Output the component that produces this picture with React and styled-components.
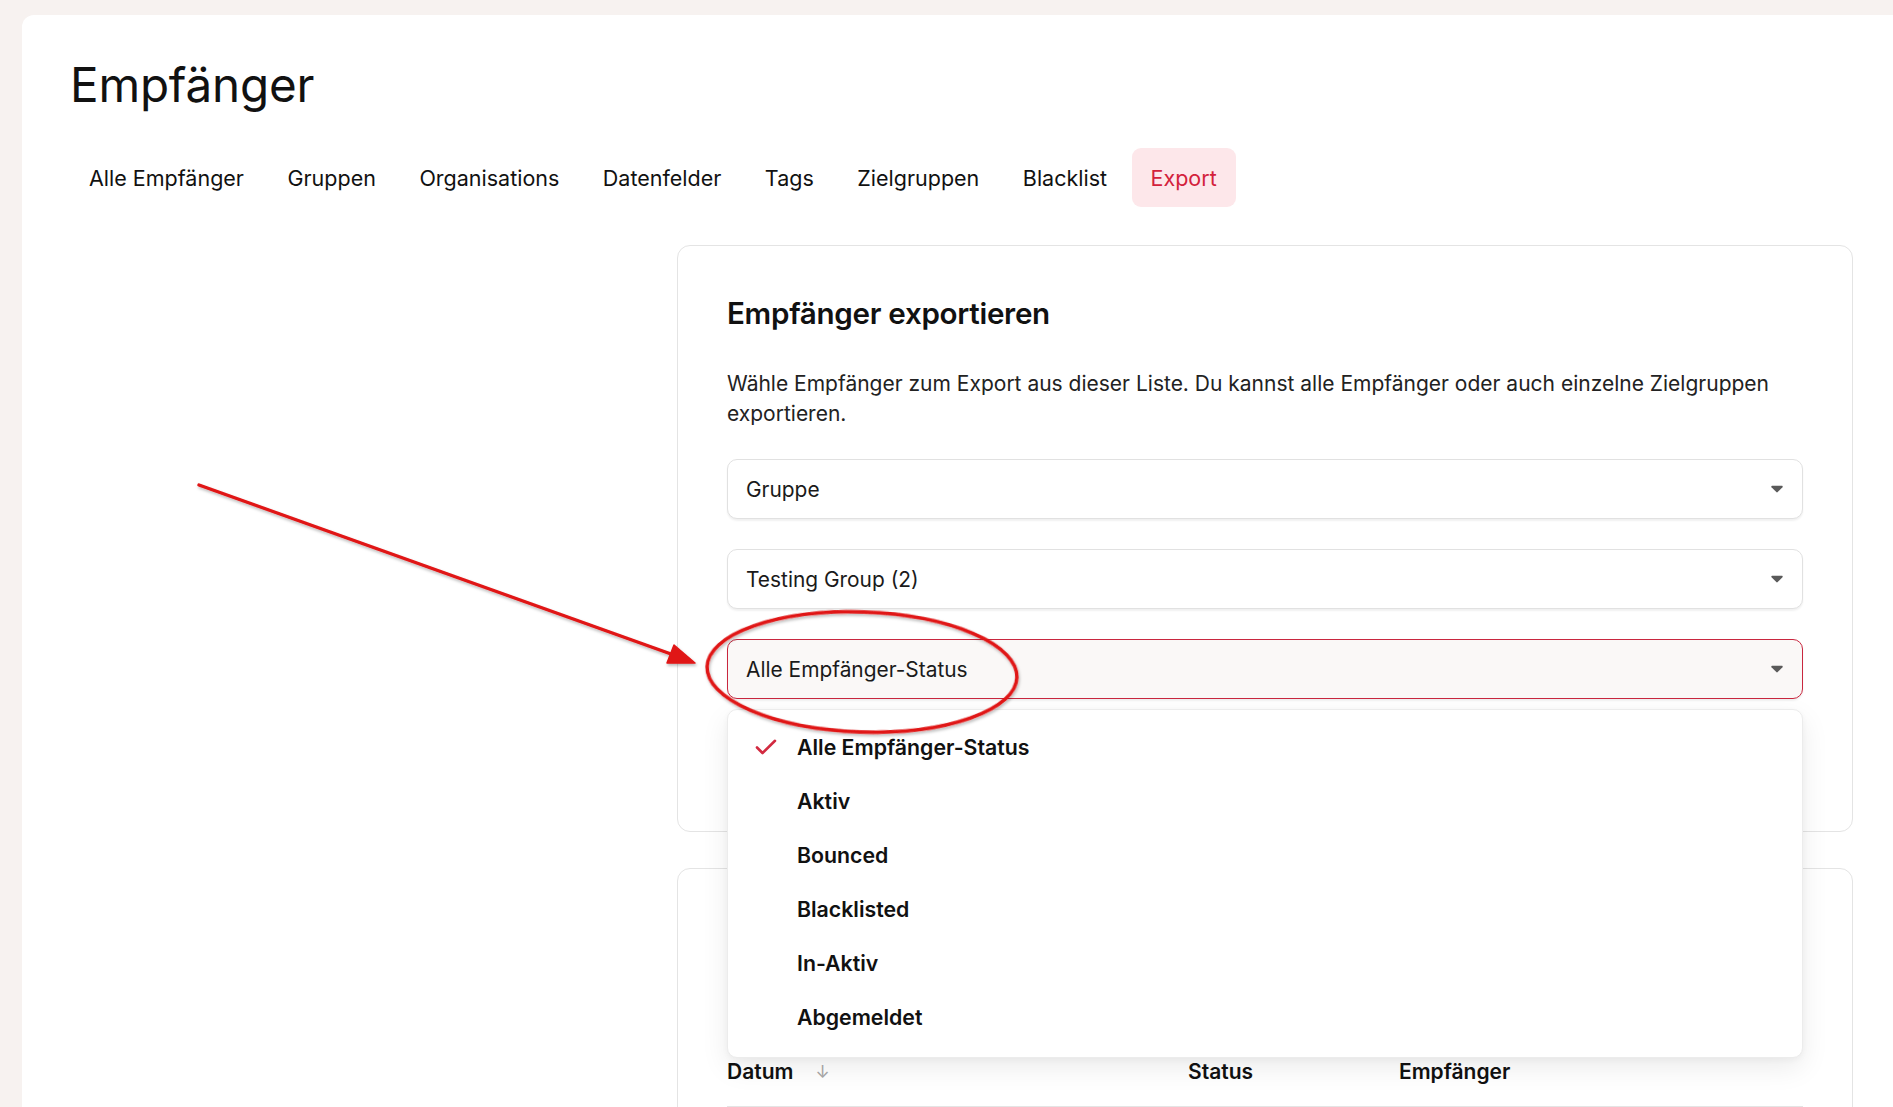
import React from 'react';
import styled, { createGlobalStyle } from 'styled-components';

const tabs = [
  'Alle Empfänger',
  'Gruppen',
  'Organisations',
  'Datenfelder',
  'Tags',
  'Zielgruppen',
  'Blacklist',
  'Export',
];

const statusOptions = [
  'Alle Empfänger-Status',
  'Aktiv',
  'Bounced',
  'Blacklisted',
  'In-Aktiv',
  'Abgemeldet',
];

const Caret = () => (
  <svg width="12" height="8" viewBox="0 0 12 8" aria-hidden="true">
    <path d="M1.2 0.8h9.6c0.8 0 1.2 0.9 0.7 1.5L6.7 7.1c-0.4 0.4-1 0.4-1.4 0L0.5 2.3C0 1.7 0.4 0.8 1.2 0.8z" fill="#5a5a5a" />
  </svg>
);

const Check = () => (
  <svg width="22" height="16" viewBox="0 0 22 16" aria-hidden="true">
    <path d="M2 8.5l5.5 5.5L20 1.8" fill="none" stroke="#d22a40" strokeWidth="2.6" strokeLinecap="round" strokeLinejoin="round" />
  </svg>
);

// red hand-drawn style markers laid over the screenshot
const Annotation = () => (
  <Overlay viewBox="0 0 1893 1107" aria-hidden="true">
    <defs>
      <filter id="markShadow" x="-10%" y="-10%" width="120%" height="130%">
        <feDropShadow dx="1" dy="2" stdDeviation="1.6" floodColor="#000" floodOpacity="0.28" />
      </filter>
    </defs>
    <g filter="url(#markShadow)" fill="none" stroke="#e01414" strokeWidth="3.4">
      <line x1="199" y1="485" x2="671" y2="654" strokeLinecap="round" />
      <polygon points="695,663 667,663 674,645" fill="#e01414" stroke="#e01414" strokeWidth="1.5" strokeLinejoin="round" />
      <ellipse cx="862" cy="672" rx="155" ry="60" transform="rotate(2 862 672)" />
    </g>
  </Overlay>
);

const App = () => (
  <>
    <GlobalStyle />
    <Page>
      <Card>
        <Title>Empfänger</Title>
        <TabList>
          {tabs.map(tab => (
            <Tab key={tab} $active={tab === 'Export'}>
              {tab}
            </Tab>
          ))}
        </TabList>

        <Layout>
          <Aside />
          <Column>
            <Panel $bottom={132}>
              <PanelTitle>Empfänger exportieren</PanelTitle>
              <PanelText>
                Wähle Empfänger zum Export aus dieser Liste. Du kannst alle Empfänger oder auch
                einzelne Zielgruppen exportieren.
              </PanelText>
              <Fields>
                <Select>
                  <span>Gruppe</span>
                  <Caret />
                </Select>
                <Select>
                  <span>Testing Group (2)</span>
                  <Caret />
                </Select>
                <SelectWrap>
                  <Select $open>
                    <span>Alle Empfänger-Status</span>
                    <Caret />
                  </Select>
                  <Menu>
                    {statusOptions.map((option, i) => (
                      <MenuItem key={option}>
                        <CheckSlot>{i === 0 && <Check />}</CheckSlot>
                        {option}
                      </MenuItem>
                    ))}
                  </Menu>
                </SelectWrap>
              </Fields>
            </Panel>

            <Panel $bottom={49}>
              <TableHead>
                <HeadCell>
                  Datum <SortArrow>↓</SortArrow>
                </HeadCell>
                <HeadCell>Status</HeadCell>
                <HeadCell>Empfänger</HeadCell>
              </TableHead>
            </Panel>
          </Column>
        </Layout>
      </Card>
      <Annotation />
    </Page>
  </>
);

const GlobalStyle = createGlobalStyle`
  html, body {
    margin: 0;
    padding: 0;
    background: #f7f2f0;
    overflow: hidden;
  }

  body {
    font-family: Inter, "Noto Sans", sans-serif;
    color: #111;
  }

  * {
    box-sizing: border-box;
  }
`;

const Page = styled.div`
  position: relative;
  height: 1107px;
  padding: 15px 0 0 22px;
  overflow: hidden;
`;

const Card = styled.main`
  width: 1879px;
  min-height: 1200px;
  padding: 42px 48px 0;
  background: #fff;
  border-radius: 12px 0 0 0;
`;

const Title = styled.h1`
  margin: 0;
  font-size: 47.6px;
  line-height: 56px;
  font-weight: 400;
  letter-spacing: -0.2px;
`;

const TabList = styled.nav`
  display: flex;
  gap: 5.5px;
  margin-top: 35px;
`;

const Tab = styled.a`
  display: flex;
  align-items: center;
  height: 59px;
  padding: 0 19px;
  border-radius: 9px;
  font-size: 21.5px;
  color: ${p => (p.$active ? '#d3213b' : '#111')};
  background: ${p => (p.$active ? '#fde7ea' : 'transparent')};
`;

const Layout = styled.div`
  display: grid;
  grid-template-columns: 607px 1fr;
  margin-top: 38px;
`;

const Aside = styled.div``;

const Column = styled.div`
  display: flex;
  flex-direction: column;
  gap: 36px;
`;

const Panel = styled.section`
  padding: 49px 49px ${p => p.$bottom}px;
  border: 1px solid #e4e4e4;
  border-radius: 13px;
  background: #fff;
`;

const PanelTitle = styled.h2`
  margin: 0;
  font-size: 29.6px;
  line-height: 36px;
  font-weight: 600;
  letter-spacing: -0.3px;
`;

const PanelText = styled.p`
  margin: 38px 0 0;
  font-size: 21px;
  line-height: 30px;
  color: #222;
`;

const Fields = styled.div`
  display: flex;
  flex-direction: column;
  gap: 30px;
  margin-top: 30px;
`;

const SelectWrap = styled.div`
  position: relative;
  z-index: 5;
`;

const Select = styled.div`
  display: flex;
  align-items: center;
  justify-content: space-between;
  height: 60px;
  padding: 0 19px 0 18px;
  font-size: 20.9px;
  color: #1a1a1a;
  border: 1px solid ${p => (p.$open ? '#c9273f' : '#e1e1e1')};
  border-radius: 10px;
  background: ${p => (p.$open ? '#faf8f7' : '#fff')};
  box-shadow: 0 2px 2px rgba(0, 0, 0, 0.06);
`;

const Menu = styled.ul`
  position: absolute;
  top: calc(100% + 10px);
  left: 0;
  right: 0;
  margin: 0;
  padding: 10px 0 13px;
  list-style: none;
  background: #fff;
  border: 1px solid #ececec;
  border-radius: 10px;
  box-shadow: 0 10px 28px rgba(0, 0, 0, 0.08), 0 2px 6px rgba(0, 0, 0, 0.04);
`;

const MenuItem = styled.li`
  display: flex;
  align-items: center;
  height: 54px;
  padding-left: 27px;
  font-size: 21.3px;
  font-weight: 600;
  color: #111;
`;

const CheckSlot = styled.span`
  display: flex;
  align-items: center;
  width: 42px;
`;

const TableHead = styled.div`
  display: grid;
  grid-template-columns: 461px 211px 1fr;
  align-items: center;
  height: 70px;
  margin-top: 119px;
  border-bottom: 1px solid #e4e4e4;
`;

const HeadCell = styled.div`
  display: flex;
  align-items: center;
  gap: 22px;
  font-size: 21px;
  font-weight: 600;
  color: #111;
`;

const SortArrow = styled.span`
  font-size: 17px;
  font-weight: 400;
  color: #a8a8a8;
`;

const Overlay = styled.svg`
  position: absolute;
  top: 0;
  left: 0;
  width: 1893px;
  height: 1107px;
  pointer-events: none;
  z-index: 20;
`;

export default App;
